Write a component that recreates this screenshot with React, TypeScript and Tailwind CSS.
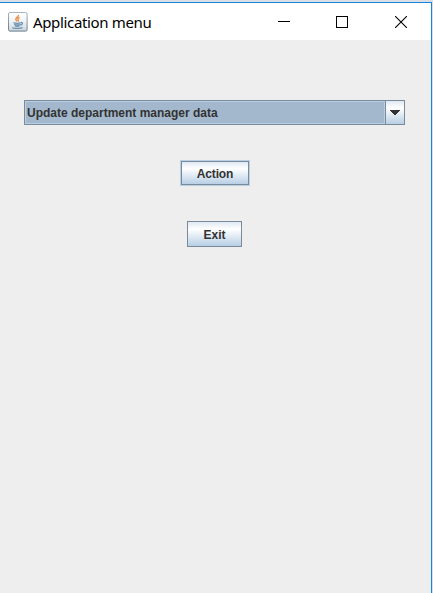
function JavaIcon() {
  return (
    <svg width="20" height="20" viewBox="0 0 20 20" className="shrink-0">
      <defs>
        <linearGradient id="tile" x1="0" y1="0" x2="0" y2="1">
          <stop offset="0" stopColor="#ffffff" />
          <stop offset="0.5" stopColor="#f0f2f4" />
          <stop offset="1" stopColor="#cbd3da" />
        </linearGradient>
        <linearGradient id="edge" x1="0" y1="0" x2="0" y2="1">
          <stop offset="0" stopColor="#a9b4be" />
          <stop offset="1" stopColor="#667b8d" />
        </linearGradient>
      </defs>
      <rect x="0.5" y="0.5" width="18.6" height="18.6" rx="1.5" fill="url(#tile)" stroke="url(#edge)" />
      <path d="M10.300 3c.8 2-3 2.600-2.500 4.400.2.900.9 1.300 1.300 2M11.600 5.400c-1.500.8-2.200 1.500-1.500 2.500.4.600.3 1-.2 1.500" fill="none" stroke="#e8914d" strokeWidth="1.500" />
      <path d="M5.500 10.700c2 .8 5.500.7 7.300 0M6.200 12.300c1.800.7 4.500.7 6 0M7 13.900c1.300.5 3.200.5 4.500 0M13 10.500c2.200-.4 2 2-.7 2.700M4.800 15.300c-.8 1.300 8.200 1.500 9.700.1" fill="none" stroke="#6b93b3" strokeWidth="1.300" />
    </svg>
  );
}

function TitleBar() {
  return (
    <header className="flex h-[37px] shrink-0 items-center bg-white pl-2">
      <JavaIcon />
      <h1 className="ml-[5px] font-['Noto_Sans','Open_Sans',sans-serif] text-[15px] leading-5 font-normal tracking-[-0.35px] whitespace-nowrap text-black">
        Application menu
      </h1>
      <div className="ml-auto flex pr-6">
        <button aria-label="Minimize" className="mr-[46px]">
          <svg width="12" height="12" viewBox="0 0 12 12" shapeRendering="crispEdges" className="-mt-[2px]">
            <path d="M0 6.500h12" stroke="#000" />
          </svg>
        </button>
        <button aria-label="Maximize" className="mr-[47px]">
          <svg width="12" height="12" viewBox="0 0 12 12" shapeRendering="crispEdges">
            <rect x="0.5" y="0.5" width="11" height="11" fill="none" stroke="#000" />
          </svg>
        </button>
        <button aria-label="Close">
          <svg width="12" height="12" viewBox="0 0 12 12">
            <path d="M0 0L12 12M12 0L0 12" stroke="#000" strokeWidth="1.1" />
          </svg>
        </button>
      </div>
    </header>
  );
}

const metal = "bg-linear-to-b from-[#dfe9f3] via-white via-30% to-[#b8cfe5]";

export default function App() {
  return (
    <div className="h-[593px] w-[433px] overflow-hidden bg-[#d9dfe5] pt-[2px] pr-px font-['Liberation_Sans',Arial,sans-serif] text-[12px] font-bold text-[#333333]">
      <div className="flex h-[591px] flex-col border-t border-r border-[#1883d7] bg-[#eeeeee]">
        <TitleBar />
        <main className="flex flex-col items-center pt-[60px]">
          <div className="mr-[2px] flex h-[25px] w-[381px] border border-[#7a8a99]">
            <div className="flex flex-1 items-center border border-[#b8cfe5] bg-[#a3b8cc] pl-px leading-none whitespace-nowrap">
              Update department manager data
            </div>
            <button aria-label="Open list" className={`flex w-[19px] items-center justify-center border-l border-[#7a8a99] ${metal}`}>
              <svg width="10" height="5" viewBox="0 0 10 5" shapeRendering="crispEdges">
                <path d="M0 0h10v1H9v1H8v1H7v1H6v1H4V4H3V3H2V2H1V1H0z" fill="#333" />
              </svg>
            </button>
          </div>
          <button className="mt-[35px] mr-px h-[26px] w-[70px] border border-[#b8cfe5]">
            <span className={`flex h-full items-center justify-center border border-[#7a8a99] pt-px tracking-[-0.15px] ${metal}`}>
              Action
            </span>
          </button>
          <button className={`mt-[35px] mr-[2px] flex h-[26px] w-[55px] items-center justify-center border border-[#7a8a99] pt-px ${metal}`}>
            Exit
          </button>
        </main>
      </div>
    </div>
  );
}
